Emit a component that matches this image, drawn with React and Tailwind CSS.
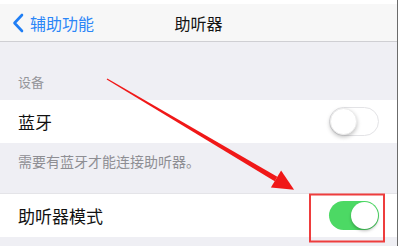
import React from 'react'

const font = { fontFamily: '"Noto Sans CJK SC", "Noto Sans", sans-serif' }

function Toggle({ on }) {
  return (
    <div
      className={
        on
          ? 'relative h-[29px] w-[50px] rounded-full bg-[#4cd964]'
          : 'relative h-[29px] w-[50px] rounded-full border border-[#e3e3e6] bg-white'
      }
    >
      <div
        className={
          on
            ? 'absolute right-[1px] top-[1px] h-[27px] w-[27px] rounded-full bg-white shadow-[0_2px_3px_rgba(0,0,0,0.25)]'
            : 'absolute left-0 top-0 h-[27px] w-[27px] rounded-full bg-white shadow-[0_2px_4px_rgba(0,0,0,0.25)] border border-[#ececec]'
        }
      />
    </div>
  )
}

export default function App() {
  return (
    <div className="flex h-[246px] w-[401px] overflow-hidden bg-white" style={font}>
      <div className="relative flex w-[397px] flex-col bg-[#efeff4]">
        {/* top strip */}
        <div className="h-[4px] bg-white" />

        {/* nav bar */}
        <div className="relative flex h-[38px] items-center border-b border-[#cfcfd3] bg-[#f7f7f7]">
          <div className="flex items-center pl-[12px] text-[16px] text-[#2b86f7]">
            <svg width="12" height="20" viewBox="0 0 12 20" className="mr-[6px]">
              <path d="M10 2 L2.5 10 L10 18" fill="none" stroke="#1f7ef5" strokeWidth="2.6" strokeLinecap="round" strokeLinejoin="round" />
            </svg>
            <span>辅助功能</span>
          </div>
          <div className="pointer-events-none absolute left-0 right-0 text-center text-[16px] text-[#141414]">
            助听器
          </div>
        </div>

        {/* section header */}
        <div className="flex h-[58px] items-end pb-[9px] pl-[18px] text-[13px] text-[#95959a]">设备</div>

        {/* bluetooth row */}
        <div className="flex h-[43px] items-center justify-between bg-white pl-[18px] pr-[18px]">
          <span className="text-[17px] text-[#111]">蓝牙</span>
          <Toggle on={false} />
        </div>

        {/* footer */}
        <div className="h-[50px] pl-[18px] pt-[8px] text-[14px] text-[#8e8e93]">需要有蓝牙才能连接助听器。</div>

        {/* hearing aid mode row */}
        <div className="flex h-[44px] items-center justify-between border-t border-[#e4e4e8] bg-white pl-[18px] pr-[18px]">
          <span className="text-[17px] text-[#111]">助听器模式</span>
          <Toggle on={true} />
        </div>

        {/* annotation overlay */}
        <svg className="pointer-events-none absolute left-0 top-0" width="397" height="246">
          <polygon points="106.7,79.4 107.3,78.6 277.3,176.8 274.7,181.2" fill="#f01818" />
          <polygon points="294.1,189.7 270.9,187.6 281.1,170.4" fill="#f01818" />
          <rect x="310" y="194.5" width="74" height="47" fill="none" stroke="#ee3d3d" strokeWidth="2" />
        </svg>
      </div>
      <div className="w-px bg-[#6b6b6b]" />
      <div className="flex-1 bg-white" />
    </div>
  )
}
